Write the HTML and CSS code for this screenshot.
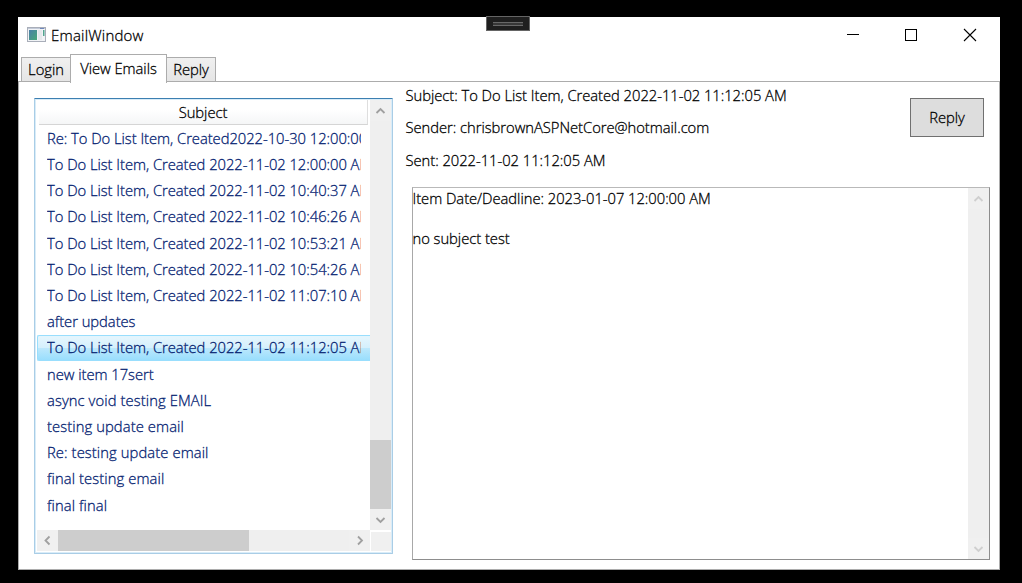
FILE: index.html
```html
<!DOCTYPE html>
<html lang="en">
<head>
<meta charset="utf-8">
<title>EmailWindow</title>
<link rel="stylesheet" href="styles.css">
</head>
<body>
<div class="debug-grip"><span class="grip-lines"></span></div>
<div class="window">
  <header class="titlebar">
    <svg class="app-icon" width="19" height="15" viewBox="0 0 19 15">
      <defs><linearGradient id="screen" x1="0" y1="0" x2="1" y2="1"><stop offset="0" stop-color="#4b7fa8"/><stop offset="1" stop-color="#48a878"/></linearGradient></defs>
      <rect x=".5" y=".5" width="18" height="14" fill="#f1f3f6" stroke="#a9aeb9"/>
      <path d="M1 1.5h17" stroke="#c2cad8"/>
      <rect x="2" y="3" width="8" height="10" fill="url(#screen)"/>
      <rect x="11" y="3" width="4" height="10" fill="#e5e8ec"/>
      <rect x="16" y="3" width="1.5" height="6" fill="#51a58f"/>
      <path d="M13 1.5h4" stroke="#6f88bb"/>
    </svg>
    <h1 class="title">EmailWindow</h1>
    <svg class="controls" width="130" height="14" viewBox="0 0 130 14" fill="none" stroke="#000">
      <path d="M0 6.5h12"/>
      <rect x="58.5" y="1.5" width="11" height="11"/>
      <path d="M117 1l12 12M129 1l-12 12" stroke-width="1.1"/>
    </svg>
  </header>
  <nav class="tabs">
    <div class="tab tab-login">Login</div>
    <div class="tab tab-view">View Emails</div>
    <div class="tab tab-reply">Reply</div>
  </nav>
  <main class="panel">
    <section class="list">
      <div class="list-main">
        <div class="list-content">
          <div class="list-header">Subject</div>
          <div class="rows">
            <div class="row"><span class="cell">Re: To Do List Item, Created2022-10-30 12:00:00 AM</span></div>
            <div class="row"><span class="cell">To Do List Item, Created 2022-11-02 12:00:00 AM</span></div>
            <div class="row"><span class="cell">To Do List Item, Created 2022-11-02 10:40:37 AM</span></div>
            <div class="row"><span class="cell">To Do List Item, Created 2022-11-02 10:46:26 AM</span></div>
            <div class="row"><span class="cell">To Do List Item, Created 2022-11-02 10:53:21 AM</span></div>
            <div class="row"><span class="cell">To Do List Item, Created 2022-11-02 10:54:26 AM</span></div>
            <div class="row"><span class="cell">To Do List Item, Created 2022-11-02 11:07:10 AM</span></div>
            <div class="row"><span class="cell">after updates</span></div>
            <div class="row selected"><span class="cell">To Do List Item, Created 2022-11-02 11:12:05 AM</span></div>
            <div class="row"><span class="cell">new item 17sert</span></div>
            <div class="row"><span class="cell wide">async void testing EMAIL</span></div>
            <div class="row"><span class="cell wide">testing update email</span></div>
            <div class="row"><span class="cell wide">Re: testing update email</span></div>
            <div class="row"><span class="cell wide">final testing email</span></div>
            <div class="row"><span class="cell wide">final final</span></div>
          </div>
        </div>
        <div class="vbar">
          <div class="arrow"><svg width="11" height="8" viewBox="0 0 11 8"><path d="M1.5 6l4-4 4 4"/></svg></div>
          <div class="vtrack"><div class="vthumb"></div></div>
          <div class="arrow"><svg width="11" height="8" viewBox="0 0 11 8"><path d="M1.5 2l4 4 4-4"/></svg></div>
        </div>
      </div>
      <div class="list-foot">
        <div class="hbar">
          <div class="arrow"><svg width="8" height="11" viewBox="0 0 8 11"><path d="M5.5 1.5l-4 4 4 4"/></svg></div>
          <div class="htrack"><div class="hthumb"></div></div>
          <div class="arrow"><svg width="8" height="11" viewBox="0 0 8 11"><path d="M2 1.5l4 4-4 4"/></svg></div>
        </div>
        <div class="corner"></div>
      </div>
    </section>
    <section class="detail">
      <div class="detail-head">
        <div class="meta">
          <div class="meta-line">Subject: To Do List Item, Created 2022-11-02 11:12:05 AM</div>
          <div class="meta-line">Sender: chrisbrownASPNetCore@hotmail.com</div>
          <div class="meta-line">Sent: 2022-11-02 11:12:05 AM</div>
        </div>
        <button class="reply">Reply</button>
      </div>
      <div class="body-box">
        <div class="body-text"><p>Item Date/Deadline: 2023-01-07 12:00:00 AM</p><p class="second">no subject test</p></div>
        <div class="vbar disabled">
          <div class="arrow"><svg width="11" height="8" viewBox="0 0 11 8"><path d="M1.5 6l4-4 4 4"/></svg></div>
          <div class="vtrack"></div>
          <div class="arrow"><svg width="11" height="8" viewBox="0 0 11 8"><path d="M1.5 2l4 4 4-4"/></svg></div>
        </div>
      </div>
    </section>
  </main>
</div>
</body>
</html>
```
FILE: styles.css
```css
* { box-sizing: border-box; }
body {
  margin: 0;
  width: 1022px;
  height: 583px;
  padding: 17px 22px 13px 18px;
  overflow: hidden;
  background: #000;
  font: 300 14.75px/20px "Open Sans", "Noto Sans", sans-serif;
  letter-spacing: -0.03px;
  -webkit-text-stroke: 0.28px currentColor;
  color: #000;
  white-space: nowrap;
}
.debug-grip {
  position: absolute;
  left: 486px;
  top: 16px;
  width: 44px;
  height: 15px;
  padding: 5px 6px;
  background: #1f1f1f;
  border: 1px solid #656565;
}
.grip-lines {
  display: block;
  height: 4px;
  background: #383838;
  border-top: 1px solid #686868;
  border-bottom: 1px solid #686868;
}
.window {
  width: 982px;
  height: 553px;
  display: flex;
  flex-direction: column;
  background: #fff;
}
.titlebar {
  height: 37px;
  display: flex;
  align-items: center;
  padding: 0 23px 2px 9px;
}
.title {
  margin: 0 0 0 5px;
  flex: 1;
  font-size: 15px;
  font-weight: 300;
  letter-spacing: 0.2px;
}
.tabs {
  height: 27px;
  display: flex;
  align-items: flex-end;
  padding-left: 3px;
}
.tab {
  height: 24px;
  border: 1px solid #acacac;
  border-bottom: 0;
  text-align: center;
  line-height: 22px;
  background: linear-gradient(#f0f0f0, #e5e5e5);
}
.tab-login { width: 50px; }
.tab-view {
  width: 97px;
  height: 29px;
  margin: 0 -1px -2px;
  line-height: 26px;
  background: #fff;
  z-index: 1;
}
.tab-reply { width: 50px; }
.panel {
  flex: 1;
  min-height: 0;
  display: flex;
  border: 1px solid #acacac;
  padding: 16px 9px 9px 15px;
}
.list {
  width: 359px;
  height: 456px;
  display: flex;
  flex-direction: column;
  border: 1px solid #a9cde6;
  border-top-color: #3c7fb1;
  border-radius: 1px;
  box-shadow: inset 0 0 0 1px #d9ecf8;
  padding: 1px 1px 2px 2px;
}
.list-main { height: 430px; display: flex; }
.list-content { width: 333px; }
.list-header {
  height: 25px;
  margin-left: 2px;
  width: 329px;
  border-right: 1px solid #dedede;
  border-bottom: 1px solid #d5d5d5;
  background: linear-gradient(#fff 40%, #f5f6f7);
  text-align: center;
  line-height: 25px;
}
.rows { padding-top: 0.9px; color: #042271; }
.row {
  height: 26.2px;
  padding: 0 9px 0 10px;
}
.cell {
  display: block;
  overflow: hidden;
  line-height: 24px;
}
.wide { letter-spacing: 0.1px; }
.selected {
  height: 25.2px;
  margin-bottom: 1px;
  border: 1px solid #99defd;
  border-right: 0;
  border-radius: 2px 0 0 2px;
  padding-left: 9px;
  background: linear-gradient(#e3f5fd 0 10%, #d5f0fc 48%, #bde8fc 50%, #99defd);
}
.selected .cell { line-height: 23.2px; }
.vbar {
  width: 21px;
  display: flex;
  flex-direction: column;
  background: #efefef;
}
.arrow {
  width: 21px;
  height: 21px;
  display: flex;
  align-items: center;
  justify-content: center;
  background: #f0f0f0;
}
.arrow path { fill: none; stroke: #a0a0a0; stroke-width: 1.8; }
.disabled .arrow path { stroke: #cfcfcf; }
.vtrack { flex: 1; padding-top: 319px; }
.vthumb { height: 69px; background: #cdcdcd; }
.list-foot { display: flex; height: 21px; }
.hbar { width: 333px; display: flex; background: #efefef; }
.htrack { flex: 1; }
.hthumb { width: 191px; height: 21px; background: #cdcdcd; }
.corner { width: 20px; margin: 2px 0 0 1px; background: #f0f0f0; }
.detail { flex: 1; display: flex; flex-direction: column; padding-left: 12.5px; }
.detail-head {
  height: 89px;
  display: flex;
  justify-content: space-between;
  padding-right: 6px;
}
.meta { margin-top: -13px; }
.meta-line { height: 20px; margin-bottom: 12.4px; }
.reply {
  width: 74px;
  height: 39px;
  padding: 0 0 2px;
  border: 1px solid #707070;
  background: #ddd;
  font: inherit;
  letter-spacing: inherit;
  color: #000;
}
.body-box {
  flex: 1;
  display: flex;
  margin-left: 6px;
  border: 1px solid #999;
  border-color: #b9b9b9 #8d8d8d #8d8d8d #a8a8a8;
}
.body-text { flex: 1; }
.body-text p { margin: 0; line-height: 20px; }
.body-text .second { margin-top: 20px; }
.disabled .vtrack { padding: 0; }
```
